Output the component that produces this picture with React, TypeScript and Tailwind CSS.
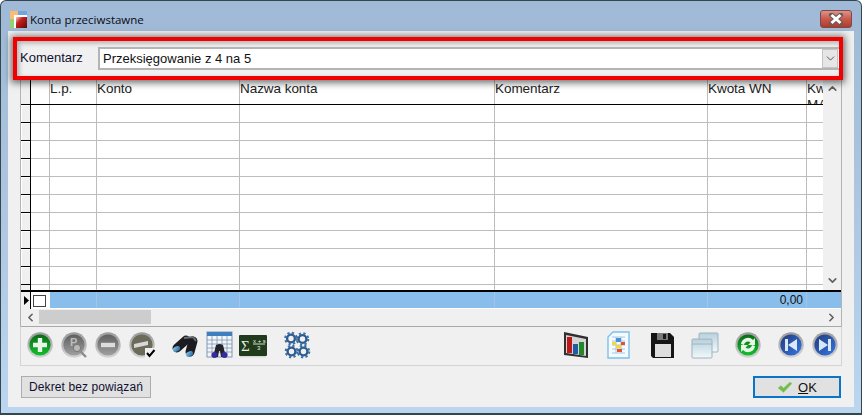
import { ChevronDown, ChevronLeft, ChevronRight, ChevronUp } from 'lucide-react';

const columns = [
    { label: '', w: 'w-[19px]' },
    { label: 'L.p.', w: 'w-[47px]' },
    { label: 'Konto', w: 'w-[143px]' },
    { label: 'Nazwa konta', w: 'w-[255px]' },
    { label: 'Komentarz', w: 'w-[213px]' },
    { label: 'Kwota WN', w: 'w-[99px]' },
];

const rows = [0, 1, 2, 3, 4, 5, 6, 7, 8, 9];

function Defs() {
    return (
        <svg width="0" height="0" className="absolute">
            <defs>
                <linearGradient id="ring" x1="0" y1="0" x2="0" y2="1">
                    <stop offset="0" stopColor="#9a9a9a" />
                    <stop offset="1" stopColor="#d4d4d4" />
                </linearGradient>
                <linearGradient id="green" x1="0" y1="0" x2="0" y2="1">
                    <stop offset="0" stopColor="#0b6a18" />
                    <stop offset="1" stopColor="#12c02c" />
                </linearGradient>
                <linearGradient id="grey" x1="0" y1="0" x2="0" y2="1">
                    <stop offset="0" stopColor="#5f5f5f" />
                    <stop offset="1" stopColor="#a0a0a0" />
                </linearGradient>
                <linearGradient id="blue" x1="0" y1="0" x2="1" y2="1">
                    <stop offset="0" stopColor="#243a78" />
                    <stop offset="1" stopColor="#3478e6" />
                </linearGradient>
                <linearGradient id="lens" x1="0" y1="0" x2="1" y2="1">
                    <stop offset="0" stopColor="#8fd0f0" />
                    <stop offset="1" stopColor="#1d5a90" />
                </linearGradient>
                <linearGradient id="red" x1="0" y1="0" x2="1" y2="1">
                    <stop offset="0" stopColor="#f4d0c8" />
                    <stop offset="0.35" stopColor="#c8201c" />
                    <stop offset="1" stopColor="#5c0a0a" />
                </linearGradient>
                <linearGradient id="glass" x1="0" y1="0" x2="0" y2="1">
                    <stop offset="0" stopColor="#b8d0dc" />
                    <stop offset="1" stopColor="#f2f8fa" />
                </linearGradient>
            </defs>
        </svg>
    );
}

function Round({ fill, children }: { fill: string; children?: React.ReactNode }) {
    return (
        <svg width="28" height="28" viewBox="0 0 28 28" className="shrink-0">
            <circle cx="14" cy="14" r="12.7" fill="url(#ring)" />
            <circle cx="14" cy="14" r="10.6" fill={fill} />
            {children}
        </svg>
    );
}

function Binoculars() {
    return (
        <g>
            <path d="M6 17 L15 9" stroke="#1c1c20" strokeWidth="9" strokeLinecap="round" />
            <path d="M19 21 L22 10" stroke="#1c1c20" strokeWidth="9" strokeLinecap="round" />
            <path d="M13 7 L22 6 L25 10" fill="none" stroke="#6a6c72" strokeWidth="2" />
            <ellipse cx="5.5" cy="18" rx="3.8" ry="2.6" fill="url(#lens)" transform="rotate(-25 5.5 18)" />
            <ellipse cx="18.5" cy="23" rx="3.8" ry="2.6" fill="url(#lens)" transform="rotate(-25 18.5 23)" />
        </g>
    );
}

function Gear({ cx, cy }: { cx: number; cy: number }) {
    return (
        <g>
            <circle cx={cx} cy={cy} r="3.9" fill="none" stroke="#2c5c92" strokeWidth="2.4" />
            <circle cx={cx} cy={cy} r="5.7" fill="none" stroke="#3f6f9f" strokeWidth="2.2" strokeDasharray="2.2 2.3" />
        </g>
    );
}

function Ic({ children }: { children: React.ReactNode }) {
    return (
        <svg width="28" height="28" viewBox="0 0 28 28" className="shrink-0">
            {children}
        </svg>
    );
}

export default function App() {
    return (
        <div className="h-[415px] w-[862px] overflow-hidden bg-white font-['Liberation_Sans',sans-serif] text-[13px] text-[#111]">
            <Defs />
            <div className="flex h-[415px] flex-col rounded-t-[6px] border border-b-2 border-[#34474f] bg-gradient-to-b from-[#9fb9d6] via-[#aec6df] to-[#bcd6f0]">
                {/* TITULO */}
                <div className="flex h-[30px] shrink-0 items-start justify-between pl-[9px] pr-[9px]">
                    <div className="mt-[10px] flex items-center gap-[3px]">
                        <svg width="17" height="17" viewBox="0 0 17 17" className="shrink-0">
                            <rect x="0" y="0" width="8" height="8" fill="#f9bb77" />
                            <rect x="8" y="0" width="9" height="4" fill="#6ea6dd" />
                            <rect x="0" y="8" width="4" height="9" fill="#92d36e" />
                            <rect x="4" y="4" width="13" height="13" fill="#fff" />
                            <rect x="6" y="6" width="11" height="11" fill="url(#red)" />
                        </svg>
                        <span className="mt-[1px] font-['Open_Sans',sans-serif] text-[11.5px] leading-none text-[#0a0a14]">Konta przeciwstawne</span>
                    </div>
                    <div className="mt-[9px] flex h-[18px] w-[32px] items-center justify-center rounded-[3px] border border-[#7c4a48] bg-gradient-to-b from-[#dc9389] via-[#c8594c] to-[#b03a2c]">
                        <svg width="18" height="12" viewBox="0 0 18 12">
                            <path d="M4.5 2 L13.5 10 M13.5 2 L4.5 10" stroke="#6a5a58" strokeWidth="5" strokeLinecap="round" />
                            <path d="M4.5 2 L13.5 10 M13.5 2 L4.5 10" stroke="#fff" strokeWidth="3" />
                        </svg>
                    </div>
                </div>

                {/* CUERPO */}
                <div className="ml-[7px] flex h-[376px] w-[846px] shrink-0 flex-col bg-[#f0f0f0]">
                    {/* COMENTARIO */}
                    <div className="relative z-10 ml-[5px] mt-[6px] flex h-[43px] w-[830px] shrink-0 items-center border-4 border-[#f00000] bg-[#f0f0f0] shadow-[0_1px_7px_2px_rgba(0,0,0,0.55),inset_2px_2px_5px_rgba(0,0,0,0.28)]">
                        <span className="mb-[3px] ml-[3px] w-[78px] shrink-0 text-[13px] leading-none text-[#101030]">Komentarz</span>
                        <div className="flex h-[23px] flex-1 items-center justify-between border-2 border-r-0 border-[#b4b4b4] bg-white pl-[3px]">
                            <span className="text-[13px] leading-none">Przeksięgowanie z 4 na 5</span>
                            <div className="mr-[1px] flex h-[19px] w-[16px] items-center justify-center border border-[#c4c4c4] bg-[#e6e6e6]">
                                <ChevronDown size={13} strokeWidth={1.8} className="text-[#555]" />
                            </div>
                        </div>
                    </div>

                    {/* TABLA */}
                    <div className="ml-[12px] flex w-[822px] shrink-0 flex-col border-x border-[#b4b4b4] bg-white">
                        <div className="flex h-[210px]">
                            <div className="w-[802px] shrink-0">
                                {/* cabecera */}
                                <div className="flex h-[25px] border-b border-black">
                                    <div className="w-[10px] shrink-0 border-r border-black bg-[#f0f0f0]" />
                                    {columns.map((c) => (
                                        <div key={c.label} className={`${c.w} shrink-0 overflow-hidden border-r border-[#bdbdbd] pt-[1px] text-[13.5px] leading-[16px] tracking-[-0.05px] text-[#222]`}>
                                            {c.label}
                                        </div>
                                    ))}
                                    <div className="w-[16px] shrink-0 overflow-hidden pt-[1px] text-[13.5px] leading-[16px] text-[#222]">Kwota MA</div>
                                </div>
                                {/* filas */}
                                {rows.map((r) => (
                                    <div key={r} className="flex h-[18px]">
                                        <div className="w-[10px] shrink-0 border-b border-r border-b-black border-r-black bg-[#f0f0f0] shadow-[inset_1px_1px_0_#fff]" />
                                        <div className="flex flex-1 border-b border-[#bdbdbd]">
                                            {columns.map((c) => (
                                                <div key={c.label} className={`${c.w} shrink-0 border-r border-[#bdbdbd]`} />
                                            ))}
                                        </div>
                                    </div>
                                ))}
                                <div className="flex h-[5px]">
                                    <div className="w-[10px] shrink-0 border-r border-black bg-[#f0f0f0]" />
                                    {columns.map((c) => (
                                        <div key={c.label} className={`${c.w} shrink-0 border-r border-[#bdbdbd]`} />
                                    ))}
                                </div>
                            </div>
                            <div className="flex w-[18px] shrink-0 flex-col items-center justify-between bg-[#f0f0f0] pb-[3px] pt-[2px]">
                                <ChevronUp size={13} strokeWidth={3} className="text-[#606060]" />
                                <ChevronDown size={13} strokeWidth={3} className="text-[#606060]" />
                            </div>
                        </div>

                        {/* pie */}
                        <div className="flex h-[19px] border-t-2 border-black">
                            <div className="flex w-[10px] shrink-0 items-center justify-end border-r border-black bg-[#f0f0f0] pr-[1px]">
                                <svg width="5" height="9" viewBox="0 0 5 9">
                                    <path d="M0 0 L5 4.5 L0 9 Z" fill="#000" />
                                </svg>
                            </div>
                            <div className="flex w-[19px] shrink-0 items-center bg-white pl-[2px]">
                                <div className="h-[12px] w-[13px] border border-[#444] bg-white" />
                            </div>
                            <div className="flex flex-1 border-b border-white bg-[#88bdec]">
                                <div className="w-[47px] shrink-0 border-r border-[#a6c4e0]" />
                                <div className="w-[143px] shrink-0 border-r border-[#a6c4e0]" />
                                <div className="w-[255px] shrink-0 border-r border-[#a6c4e0]" />
                                <div className="w-[213px] shrink-0 border-r border-[#a6c4e0]" />
                                <div className="w-[99px] shrink-0 border-r border-[#a6c4e0] pr-[3px] text-right text-[12px] leading-[17px]">0,00</div>
                            </div>
                        </div>

                        {/* scroll horizontal */}
                        <div className="flex h-[17px] items-center justify-between bg-[#f0f0f0] pb-[1px] pl-[1px] pr-[1px]">
                            <div className="flex items-center">
                                <div className="flex w-[17px] justify-center">
                                    <ChevronLeft size={13} strokeWidth={3} className="text-[#606060]" />
                                </div>
                                <div className="h-[14px] w-[112px] bg-[#cdcdcd]" />
                            </div>
                            <ChevronRight size={13} strokeWidth={3} className="mr-[2px] text-[#606060]" />
                        </div>
                    </div>

                    {/* BOTONES */}
                    <div className="ml-[12px] flex h-[40px] w-[822px] shrink-0 items-center justify-between border border-[#d4d4d4] border-t-[#a8a8a8] pb-[2px]">
                        <div className="flex items-center pl-[5px]">
                            <Round fill="url(#green)">
                                <path d="M14 7 V21 M7 14 H21" stroke="#e8f4e8" strokeWidth="4.4" />
                            </Round>
                            <div className="ml-[6px]">
                                <Round fill="url(#grey)">
                                    <text x="10" y="15" fontSize="11" fontWeight="bold" fill="#bdbdbd" fontFamily="Liberation Sans">P</text>
                                    <circle cx="17" cy="17" r="3.6" fill="#b8b8b8" stroke="#777" />
                                    <path d="M19.5 19.5 L26 26" stroke="#8c8c8c" strokeWidth="2.4" />
                                </Round>
                            </div>
                            <div className="ml-[6px]">
                                <Round fill="url(#grey)">
                                    <path d="M7 14 H21" stroke="#dcdcdc" strokeWidth="4.4" />
                                </Round>
                            </div>
                            <div className="ml-[6px]">
                                <Round fill="#6c6a58">
                                    <path d="M6 13 L20 10 V14 L6 17 Z" fill="#d8d8d8" />
                                    <rect x="17" y="17" width="11" height="11" fill="#f0f0f0" />
                                    <path d="M19 22 L21.5 25 L26.5 19" fill="none" stroke="#000" strokeWidth="2" />
                                </Round>
                            </div>
                            <div className="ml-[15px]">
                                <Ic>
                                    <Binoculars />
                                </Ic>
                            </div>
                            <div className="ml-[6px]">
                                <Ic>
                                    <rect x="2" y="1" width="25" height="25" fill="#f2f6fa" stroke="#7d98b4" />
                                    <rect x="2" y="1" width="25" height="4" fill="#3f7fc0" />
                                    <path d="M2 9 H27 M2 13 H27 M2 17 H27 M2 21 H27 M7 5 V26 M12 5 V26 M17 5 V26 M22 5 V26" stroke="#7d98b4" strokeWidth="0.8" />
                                    <path d="M8 26 L11 14 L14 13 L15 13 L18 14 L21 26 L16 26 L15 20 L14 20 L13 26 Z" fill="#23232b" />
                                    <circle cx="9.5" cy="24" r="3" fill="#3a2a9c" />
                                    <circle cx="19.5" cy="24" r="3" fill="#3a2a9c" />
                                </Ic>
                            </div>
                            <div className="ml-[6px]">
                                <Ic>
                                    <rect x="0" y="4" width="28" height="21" rx="1" fill="#1f3b1c" />
                                    <rect x="1" y="25" width="26" height="1.4" fill="#d8d8d8" />
                                    <text x="2" y="20" fontSize="15" fill="#e8f0e0" fontFamily="Liberation Serif">Σ</text>
                                    <path d="M14 13 H26" stroke="#e8f0e0" strokeWidth="0.9" />
                                    <text x="14" y="11.5" fontSize="6" fill="#e8f0e0" fontFamily="Liberation Sans">x + s</text>
                                    <text x="18" y="19" fontSize="6" fill="#e8f0e0" fontFamily="Liberation Sans">3</text>
                                </Ic>
                            </div>
                            <div className="ml-[16px]">
                                <Ic>
                                    <Gear cx={8} cy={7.5} />
                                    <Gear cx={19.5} cy={8} />
                                    <Gear cx={8.5} cy={20.5} />
                                    <Gear cx={20.5} cy={20.5} />
                                </Ic>
                            </div>
                        </div>

                        <div className="flex items-center pr-[2px]">
                            <Ic>
                                <path d="M2 1 L26 6 L26 27 L2 24 Z" fill="#303030" />
                                <path d="M4 4 L24 8 L24 25 L4 22 Z" fill="#d4d4d4" />
                                <rect x="5" y="6" width="5" height="16" fill="#c01818" />
                                <rect x="11" y="13" width="5" height="10" fill="#2458a8" />
                                <rect x="17" y="11" width="5" height="13" fill="#1f8a2c" />
                            </Ic>
                            <div className="ml-[14px]">
                                <Ic>
                                    <path d="M9 1 H25 V27 H4 V6 Z" fill="#f4faff" stroke="#7cc0ec" strokeWidth="1.4" />
                                    <path d="M8 6 H21 M8 10 H21 M8 14 H21 M8 18 H21 M8 22 H21 M12 6 V22 M17 6 V22" stroke="#9cc4dc" strokeWidth="0.9" />
                                    <rect x="12" y="7" width="5" height="4" fill="#4c90d8" />
                                    <rect x="8" y="11" width="4" height="3" fill="#f2d838" />
                                    <rect x="12" y="14" width="5" height="3" fill="#f2d838" />
                                    <rect x="17" y="11" width="4" height="3" fill="#e8502c" />
                                    <rect x="13" y="18" width="5" height="3" fill="#e8502c" />
                                </Ic>
                            </div>
                            <div className="ml-[16px]">
                                <Ic>
                                    <path d="M3 2 H22 L26 6 V27 H5 L3 25 Z" fill="#151515" />
                                    <rect x="9" y="2" width="11" height="7" fill="#7a7a7a" />
                                    <rect x="15" y="3" width="3" height="5" fill="#1a1a1a" />
                                    <rect x="7" y="13" width="16" height="13" fill="#dedede" />
                                </Ic>
                            </div>
                            <div className="ml-[15px]">
                                <Ic>
                                    <rect x="8" y="2" width="19" height="19" rx="1" fill="url(#glass)" stroke="#9cb4c0" />
                                    <rect x="1" y="8" width="20" height="19" rx="1" fill="url(#glass)" stroke="#9cb4c0" />
                                    <path d="M1 13 H21" stroke="#9cb4c0" />
                                </Ic>
                            </div>
                            <div className="ml-[15px]">
                                <Round fill="url(#green)">
                                    <path d="M7 13 A7 7 0 0 1 19 9 L21 7 V14 H14 L16.5 11.5 A4 4 0 0 0 10 14 Z" fill="#e8f6e8" />
                                    <path d="M21 15 A7 7 0 0 1 9 19 L7 21 V14 H14 L11.5 16.5 A4 4 0 0 0 18 14 Z" fill="#e8f6e8" />
                                </Round>
                            </div>
                            <div className="ml-[15px]">
                                <Round fill="url(#blue)">
                                    <path d="M8 8 H11 V20 H8 Z M11 14 L20 8 V20 Z" fill="#d8e8f8" />
                                </Round>
                            </div>
                            <div className="ml-[6px]">
                                <Round fill="url(#blue)">
                                    <path d="M17 8 H20 V20 H17 Z M8 8 L17 14 L8 20 Z" fill="#d8e8f8" />
                                </Round>
                            </div>
                        </div>
                    </div>

                    {/* ACCIONES */}
                    <div className="ml-[13px] mt-[10px] flex w-[820px] items-start justify-between">
                        <button className="h-[22px] w-[130px] border border-[#adadad] bg-[#e1e1e1] text-[12px] leading-none tracking-[0.1px] text-[#101030]">Dekret bez powiązań</button>
                        <button className="flex h-[22px] w-[88px] items-center justify-center gap-[5px] border-2 border-[#0a74c8] bg-[#e1e1e1] text-[13px] leading-none">
                            <svg width="16" height="12" viewBox="0 0 16 12">
                                <path d="M1 7 L4 4.5 L6.5 7 L13 1 L15 2.5 L6.5 11.5 Z" fill="#6cc04a" stroke="#9ac88c" strokeWidth="0.5" />
                            </svg>
                            <span><span className="underline">O</span>K</span>
                        </button>
                    </div>
                </div>
            </div>
        </div>
    );
}
